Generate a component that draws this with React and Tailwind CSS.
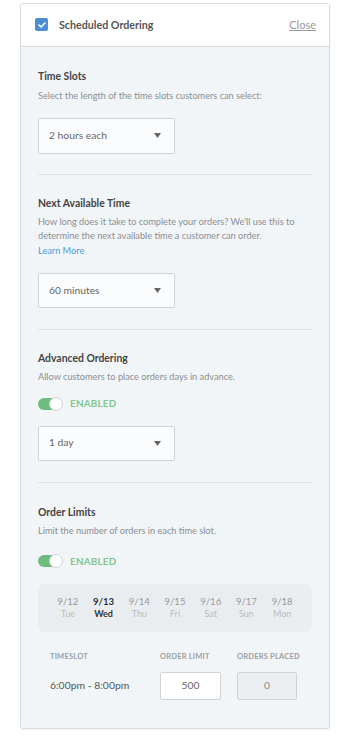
import React from "react";

const font = { fontFamily: "Lato, 'Open Sans', sans-serif" };

function Select({ value, h = "h-[36px]" }) {
  return (
    <div className={`w-[137px] ${h} bg-[#fbfcfd] border border-[#cfd4d9] rounded-[2px] flex items-center justify-between pl-[10px] pr-[13px]`}>
      <span className="text-[10.3px] text-[#666]">{value}</span>
      <svg width="7" height="5" viewBox="0 0 7 5"><path d="M0 0H7L3.5 5Z" fill="#666" /></svg>
    </div>
  );
}

function Toggle() {
  return (
    <div className="flex items-center h-[12px]">
      <div className="relative w-[24px] h-[12px] rounded-full bg-[#6cbd7f]">
        <div className="absolute right-[-1px] top-[-1px] w-[14px] h-[14px] rounded-full bg-white border border-[#cfd4d9]" />
      </div>
      <span className="ml-[8px] text-[9.9px] font-bold text-[#80c68f] tracking-[0.2px]">ENABLED</span>
    </div>
  );
}

function Heading({ children }) {
  return <div className="text-[10.4px] leading-[16px] font-bold text-[#444]">{children}</div>;
}

function Desc({ children, className = "" }) {
  return <div className={`text-[9.2px] leading-[14.5px] text-[#8a8f94] ${className}`}>{children}</div>;
}

const dates = [
  ["9/12", "Tue"],
  ["9/13", "Wed"],
  ["9/14", "Thu"],
  ["9/15", "Fri"],
  ["9/16", "Sat"],
  ["9/17", "Sun"],
  ["9/18", "Mon"],
];

export default function App() {
  return (
    <div className="w-[347px] h-[744px] bg-white pt-[3px] pl-[20px]" style={font}>
      <div className="w-[310px] border border-[#d6dbe0] rounded-[3px] shadow-[0_1px_2px_rgba(0,0,0,0.06)] overflow-hidden">
        <div className="h-[43px] bg-white border-b border-[#d6dbe0] flex items-center justify-between pl-[14px] pr-[13px]">
          <div className="flex items-center">
            <div className="w-[13px] h-[13px] rounded-[2px] bg-[#4a8fd6] flex items-center justify-center">
              <svg width="8" height="6" viewBox="0 0 8 6"><path d="M1 3L3 5L7 1" stroke="white" strokeWidth="1.6" fill="none" strokeLinecap="round" strokeLinejoin="round" /></svg>
            </div>
            <span className="ml-[11px] text-[10.7px] font-bold text-[#555]">Scheduled Ordering</span>
          </div>
          <span className="text-[11px] text-[#999] underline">Close</span>
        </div>
        <div className="bg-[#f2f5f7] px-[17px]">
          <div className="pt-[21px] pb-[20px] border-b border-[#dfe3e7]">
            <Heading>Time Slots</Heading>
            <Desc className="mt-[5px]">Select the length of the time slots customers can select:</Desc>
            <div className="mt-[14px]"><Select value="2 hours each" /></div>
          </div>
          <div className="pt-[20px] pb-[21px] border-b border-[#dfe3e7]">
            <Heading>Next Available Time</Heading>
            <Desc className="mt-[4px]">How long does it take to complete your orders? We'll use this to determine the next available time a customer can order.</Desc>
            <div className="text-[9.2px] leading-[14.5px] text-[#4a9be0]">Learn More</div>
            <div className="mt-[15px]"><Select value="60 minutes" h="h-[35px]" /></div>
          </div>
          <div className="pt-[20px] pb-[21px] border-b border-[#dfe3e7]">
            <Heading>Advanced Ordering</Heading>
            <Desc className="mt-[4px]">Allow customers to place orders days in advance.</Desc>
            <div className="mt-[13px]"><Toggle /></div>
            <div className="mt-[16px]"><Select value="1 day" h="h-[35px]" /></div>
          </div>
          <div className="pt-[21px] pb-[28px]">
            <Heading>Order Limits</Heading>
            <Desc className="mt-[4px]">Limit the number of orders in each time slot.</Desc>
            <div className="mt-[17px]"><Toggle /></div>
            <div className="mt-[17px] h-[48px] rounded-[7px] bg-[#e9edf0] px-[12px] grid grid-cols-7 items-center">
              {dates.map(([d, w], i) => (
                <div key={d} className="flex flex-col items-center leading-[12px]">
                  <span className={`text-[9.6px] ${i === 1 ? "font-bold text-[#333]" : "text-[#999]"}`}>{d}</span>
                  <span className={`text-[9px] ${i === 1 ? "font-bold text-[#333]" : "text-[#bbb]"}`}>{w}</span>
                </div>
              ))}
            </div>
            <div className="mt-[20px] pl-[12px] grid grid-cols-[110px_77px_1fr] text-[7.5px] leading-[10px] font-bold text-[#9a9fa4] tracking-[0.2px]">
              <span>TIMESLOT</span>
              <span>ORDER LIMIT</span>
              <span>ORDERS PLACED</span>
            </div>
            <div className="mt-[10px] pl-[12px] grid grid-cols-[110px_77px_1fr] items-center">
              <span className="text-[10.4px] text-[#555]">6:00pm - 8:00pm</span>
              <div className="w-[61px] h-[28px] bg-white border border-[#cfd4d9] rounded-[2px] flex items-center justify-center text-[10.3px] text-[#666]">500</div>
              <div className="w-[60px] h-[28px] bg-[#eceff1] border border-[#cfd4d9] rounded-[2px] flex items-center justify-center text-[10.3px] text-[#888]">0</div>
            </div>
          </div>
        </div>
      </div>
    </div>
  );
}
